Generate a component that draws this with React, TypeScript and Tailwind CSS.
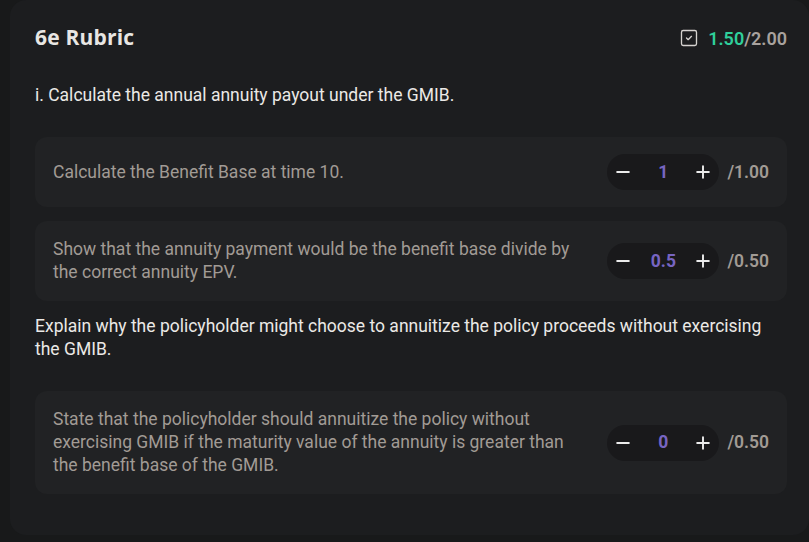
import { Minus, Plus, SquareCheck } from "lucide-react"

type Item = { text: string; value: string; max: string }

const sections: { title: string; items: Item[] }[] = [
  {
    title: "i. Calculate the annual annuity payout under the GMIB.",
    items: [
      { text: "Calculate the Benefit Base at time 10.", value: "1", max: "/1.00" },
      {
        text: "Show that the annuity payment would be the benefit base divide by the correct annuity EPV.",
        value: "0.5",
        max: "/0.50",
      },
    ],
  },
  {
    title:
      "Explain why the policyholder might choose to annuitize the policy proceeds without exercising the GMIB.",
    items: [
      {
        text: "State that the policyholder should annuitize the policy without exercising GMIB if the maturity value of the annuity is greater than the benefit base of the GMIB.",
        value: "0",
        max: "/0.50",
      },
    ],
  },
]

function Stepper({ value, max }: { value: string; max: string }) {
  return (
    <div className="flex items-center gap-2 shrink-0">
      <div className="flex items-center justify-between w-[112px] h-9 rounded-full bg-[#19191b] px-[6px]">
        <button className="shrink-0 flex justify-center text-[#ececec]">
          <Minus size={20} strokeWidth={2.3} />
        </button>
        <span className="text-[17.5px] font-bold text-[#7765c2]">{value}</span>
        <button className="shrink-0 flex justify-center text-[#ececec]">
          <Plus size={20} strokeWidth={2.3} />
        </button>
      </div>
      <span className="text-[17.5px] font-semibold text-[#a19b95]">{max}</span>
    </div>
  )
}

export default function App() {
  return (
    <div className="min-h-screen bg-[#18191a] pl-[10px] pb-[7px] font-['Roboto',sans-serif]">
      <div className="bg-[#1c1d1f] rounded-2xl pl-[25px] pr-[22px] pt-6 pb-[41px]">
        <div className="flex items-center justify-between h-7">
          <h2 className="text-[21px] font-bold text-[#e8e6e3] font-['Open_Sans',sans-serif] tracking-[0.2px]">
            6e Rubric
          </h2>
          <div className="flex items-center gap-[9px]">
            <SquareCheck size={20} strokeWidth={1.6} className="text-[#d6d3d0]" />
            <span className="text-[18px] font-semibold">
              <span className="text-[#2fcf9b]">1.50</span>
              <span className="text-[#a8a29e]">/2.00</span>
            </span>
          </div>
        </div>

        <div className="mt-8 flex flex-col gap-[14px]">
          {sections.map((s, i) => (
            <div key={i} className="flex flex-col gap-[14px]">
              <p className="text-[17.5px] leading-[23px] text-[#ebe9e6] mb-4">{s.title}</p>
              {s.items.map((it, j) => (
                <div
                  key={j}
                  className="flex items-center justify-between gap-8 bg-[#212224] rounded-xl pl-[18px] pr-[18px] py-[17px]"
                >
                  <p className="text-[17.5px] leading-[23px] text-[#a19b95] max-w-[530px]">{it.text}</p>
                  <Stepper value={it.value} max={it.max} />
                </div>
              ))}
            </div>
          ))}
        </div>
      </div>
    </div>
  )
}
